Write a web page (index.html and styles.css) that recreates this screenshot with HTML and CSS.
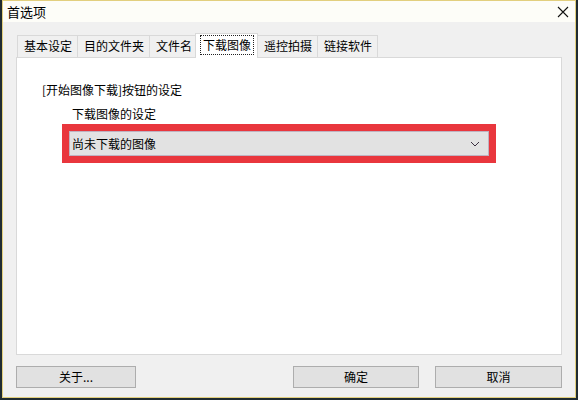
FILE: index.html
```html
<!DOCTYPE HTML>
<html lang="zh-CN">
<head>
<meta charset="utf-8">
<title>首选项</title>
<link rel="stylesheet" href="styles.css">
</head>
<body>
  <div class="window">
    <div class="titlebar">
      <span class="title">首选项</span>
      <svg class="close" width="12" height="12" viewBox="0 0 12 12">
        <path d="M1 1 L11 11 M11 1 L1 11" stroke="#111" stroke-width="1.1" fill="none"/>
      </svg>
    </div>
    <div class="content">
      <div class="tabs">
        <div class="tab">基本设定</div>
        <div class="tab">目的文件夹</div>
        <div class="tab">文件名</div>
        <div class="tab active"><span class="focus">下载图像</span></div>
        <div class="tab">遥控拍摄</div>
        <div class="tab">链接软件</div>
      </div>
      <div class="panel">
        <p class="caption">[开始图像下载]按钮的设定</p>
        <div class="group">
          <p class="caption">下载图像的设定</p>
          <div class="highlight">
            <div class="combo">
              <span>尚未下载的图像</span>
              <svg width="10" height="6" viewBox="0 0 10 6">
                <path d="M1 1 L5 5 L9 1" stroke="#3a3040" stroke-width="1" fill="none"/>
              </svg>
            </div>
          </div>
        </div>
      </div>
      <div class="buttons">
        <button class="btn about">关于...</button>
        <div class="right">
          <button class="btn ok">确定</button>
          <button class="btn cancel">取消</button>
        </div>
      </div>
    </div>
  </div>
</body>
</html>
```

FILE: styles.css
```css
* {
	box-sizing: border-box;
}
body {
	margin: 0;
	width: 578px;
	height: 400px;
	overflow: hidden;
	background: #1f2b31;
	font: 12px/16px "Noto Sans CJK SC", "Microsoft YaHei", sans-serif;
	color: #000;
}
.window {
	margin-left: 2px;
	width: 574px;
	height: 398px;
	background: #f0f0f0;
	border: 1px solid #e2cf7e;
	display: flex;
	flex-direction: column;
}
.titlebar {
	height: 21px;
	background: #fdfdf8;
	display: flex;
	align-items: center;
	justify-content: space-between;
	padding: 0 6px 0 4px;
}
.title { font-size: 13px; }
.close { margin-top: 1px; }

.content {
	flex: 1;
	padding: 11px 11px 9px 13px;
	display: flex;
	flex-direction: column;
}
.tabs {
	display: flex;
	align-items: flex-end;
	height: 24px;
	padding-left: 1px;
	position: relative;
	z-index: 1;
}
.tab {
	height: 22px;
	padding: 2px 5px 0 6px;
	background: #f0f0f0;
	border: 1px solid #d9d9d9;
	border-bottom: none;
	margin-right: -1px;
	white-space: nowrap;
}
.tab.active {
	height: 25px;
	margin: 0 -1px 0 -2px;
	padding: 2px 4px 0 5px;
	background: #fff;
	border-color: #d9d9d9;
	position: relative;
	top: 1px;
}
.focus {
	display: inline-block;
	padding: 1px 2px 1px 2px;
	outline: 1px dotted #222;
	outline-offset: 0;
}
.panel {
	height: 298px;
	margin-right: 2px;
	background: #fff;
	border: 1px solid #d9d9d9;
	padding: 24px 25px;
}
.caption {
	margin: 0;
	line-height: 16px;
}
.group {
	padding: 8px 0 0 30px;
}
.group .caption { margin-bottom: 2px; }
.highlight {
	width: 434px;
	margin-left: -10px;
	border: 7px solid #e9363d;
	background: #f6eef0;
	padding: 0;
}
.combo {
	height: 25px;
	background: #e2e2e2;
	border: 1px solid #bfb2c0;
	display: flex;
	align-items: center;
	justify-content: space-between;
	padding: 0 8px 0 2px;
}
.buttons {
	margin-top: 11px;
	margin-right: 2px;
	display: flex;
	justify-content: space-between;
}
.right {
	display: flex;
	gap: 16px;
}
.btn {
	height: 22px;
	font: inherit;
	color: #000;
	background: #e1e1e1;
	border: 1px solid #adadad;
	padding: 0;
}
.about { width: 120px; }
.ok { width: 126px; }
.cancel { width: 127px; }
```
